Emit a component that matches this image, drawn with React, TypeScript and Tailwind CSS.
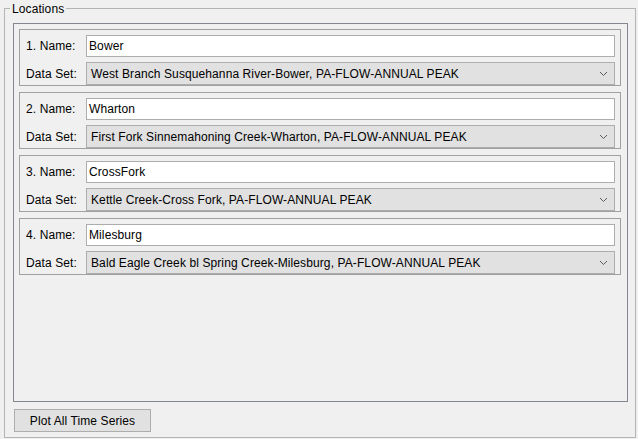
import React from "react";

interface Location {
  name: string;
  dataSet: string;
}

const locations: Location[] = [
  { name: "Bower", dataSet: "West Branch Susquehanna River-Bower, PA-FLOW-ANNUAL PEAK" },
  { name: "Wharton", dataSet: "First Fork Sinnemahoning Creek-Wharton, PA-FLOW-ANNUAL PEAK" },
  { name: "CrossFork", dataSet: "Kettle Creek-Cross Fork, PA-FLOW-ANNUAL PEAK" },
  { name: "Milesburg", dataSet: "Bald Eagle Creek bl Spring Creek-Milesburg, PA-FLOW-ANNUAL PEAK" },
];

const Chevron = () => (
  <svg width="9" height="6" viewBox="0 0 9 6" className="shrink-0">
    <path d="M1 1 L4.5 4.5 L8 1" fill="none" stroke="#5a5a5a" strokeWidth="1" />
  </svg>
);

const LocationRow: React.FC<{ index: number; loc: Location }> = ({ index, loc }) => {
  return (
    <div className="flex flex-col gap-[5px] h-[57px] border border-[#a0a0a0] pt-[5px] pr-[5px]">
      <div className="flex items-center h-[22px]">
        <span className="w-[66px] pl-[6px] shrink-0">{index}. Name:</span>
        <div className="flex-1 h-[22px] bg-white border border-[#adadad] flex items-center pl-[2px]">
          {loc.name}
        </div>
      </div>
      <div className="flex items-center h-[23px]">
        <span className="w-[66px] pl-[6px] shrink-0">Data Set:</span>
        <div className="flex-1 h-[23px] bg-[#e1e1e1] border border-[#adadad] flex items-center pl-[4px] pr-[6px]">
          <span className="flex-1">{loc.dataSet}</span>
          <Chevron />
        </div>
      </div>
    </div>
  );
};

export default function App() {
  return (
    <div
      className="w-[638px] h-[439px] bg-[#f0f0f0] text-[12px] tracking-[0.1px] text-black pt-[8px] pl-[4px] overflow-hidden"
      style={{ fontFamily: '"Liberation Sans", Arial, sans-serif' }}
    >
      <div className="relative w-[632px] h-[430px] border border-[#b4b4b4] pt-[14px] pl-[8px] pr-[7px] flex flex-col">
        <span className="absolute left-[5px] -top-[8px] px-[2px] bg-[#f0f0f0] leading-[16px]">
          Locations
        </span>
        <div className="h-[379px] border border-[#828790] pt-[5px] pl-[5px] pr-[6px] flex flex-col gap-[6px]">
          {locations.map((loc, i) => (
            <LocationRow key={loc.name} index={i + 1} loc={loc} />
          ))}
        </div>
        <div className="mt-[7px]">
          <button className="w-[137px] h-[23px] bg-[#e1e1e1] border border-[#adadad] ml-[1px] flex items-center justify-center">
            Plot All Time Series
          </button>
        </div>
      </div>
    </div>
  );
}
